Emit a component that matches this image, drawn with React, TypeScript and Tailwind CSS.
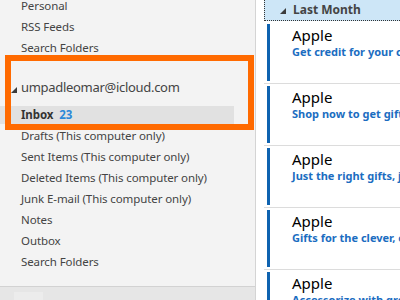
import React from 'react';

const font = { fontFamily: '"Noto Sans", "Open Sans", sans-serif' };

const topFolders = ['Personal', 'RSS Feeds', 'Search Folders'];
const accountFolders = [
  'Drafts (This computer only)',
  'Sent Items (This computer only)',
  'Deleted Items (This computer only)',
  'Junk E-mail (This computer only)',
  'Notes',
  'Outbox',
  'Search Folders',
];

const mails = [
  'Get credit for your current device',
  'Shop now to get gifts delivered',
  'Just the right gifts, just in time',
  'Gifts for the clever, creative',
  'Accessorize with great gifts',
];

const Expander: React.FC<{ className?: string }> = ({ className }) => (
  <svg width="6" height="6" viewBox="0 0 6 6" className={className}>
    <polygon points="6,0 6,6 0,6" fill="#3c3c3c" />
  </svg>
);

export default function App() {
  return (
    <div className="relative flex h-[300px] w-[400px] overflow-hidden bg-white" style={font}>
      {/* folder pane */}
      <div className="flex w-[256px] shrink-0 flex-col border-r border-[#d4d4d4] bg-[#f3f3f3] text-[11.5px] tracking-[-0.1px] text-[#444]">
        <div className="-mt-[5px] flex flex-col">
          {topFolders.map((f) => (
            <div key={f} className="flex h-[21px] items-center pl-[21px]">
              {f}
            </div>
          ))}
        </div>
        <div className="mt-[18px] flex h-[24px] items-center text-[13px] tracking-[-0.3px]">
          <Expander className="ml-[11px] mr-[4px] mt-[3px]" />
          <span>umpadleomar@icloud.com</span>
        </div>
        <div className="mt-[4px] h-[21px]">
          <div className="mt-[2px] flex h-[18px] w-[234px] items-center bg-[#e1e1e1] pl-[21px]">
            <span className="font-bold text-[#333]">Inbox</span>
            <span className="ml-[6px] font-bold text-[#2b88d8]">23</span>
          </div>
        </div>
        {accountFolders.map((f, i) => (
          <div key={i} className="flex h-[21px] items-center pl-[21px]">
            {f}
          </div>
        ))}
        <div className="mt-auto flex h-[14px] border-t border-[#d2d2d2] bg-[#e6e6e6]">
          <div className="ml-[14px] mt-[5px] h-[9px] w-[29px] bg-[#ececec]" />
        </div>
      </div>

      {/* message list */}
      <div className="flex min-w-0 flex-1 flex-col pl-[8px]">
        <div className="flex h-[21px] shrink-0 items-center border-b border-l border-dotted border-[#333] bg-[#cde6f7] pl-[15px] text-[12px] font-bold text-[#444]">
          <Expander className="mr-[7px] mt-[2px]" />
          <span>Last Month</span>
        </div>
        <div className="mt-[3px] flex flex-col">
          {mails.map((m, i) => (
            <div key={i} className="flex flex-col">
              <div className="flex h-[57px] pl-[3px]">
                <div className="w-[3px] shrink-0 bg-[#0f63b0]" />
                <div className="flex min-w-0 flex-col pl-[22px] pt-[1px]">
                  <div className="whitespace-nowrap text-[15px] leading-[20px] text-black">Apple</div>
                  <div className="whitespace-nowrap text-[11px] font-bold leading-[14px] text-[#1b6dc1]">{m}</div>
                </div>
              </div>
              <div className="my-[2px] h-px bg-[#dcdcdc]" />
            </div>
          ))}
        </div>
      </div>

      {/* annotation box */}
      <div className="absolute left-[5px] top-[55px] h-[75px] w-[249px] border-[6px] border-[#ff6a00]" />
    </div>
  );
}
